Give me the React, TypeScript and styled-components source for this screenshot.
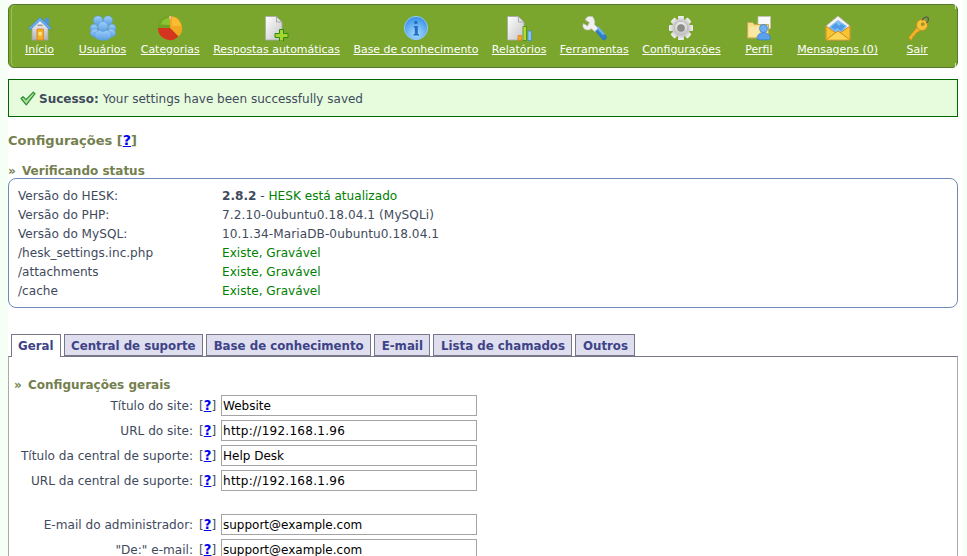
import React from "react";
import styled, { createGlobalStyle } from "styled-components";

const Global = createGlobalStyle`
  html, body {
    margin: 0;
    height: 100%;
    overflow: hidden;
    background: #f5fff5;
  }
  body {
    font-family: "DejaVu Sans", Verdana, sans-serif;
    font-size: 12.1px;
    color: #414a5c;
  }
`;

const Wrapper = styled.div`
  width: 950px;
  margin-left: 8px;
  padding: 4px 5px 0 0;
  background: #fff;
`;

const Menu = styled.nav`
  position: relative;
  display: flex;
  height: 64px;
  box-sizing: border-box;
  background: #7aa62d;
  border: 1px solid #55792a;
  border-radius: 6px;
  box-shadow: inset 2px 0 0 #7aa62d, inset 3px 0 0 #97c04f;

  &::before,
  &::after {
    content: "";
    position: absolute;
    right: 1px;
    width: 1px;
    height: 4px;
    background: #d5e4ba;
  }
  &::before { top: 0; }
  &::after { bottom: 0; }
`;

const MenuItem = styled.a<{ $min?: number }>`
  display: flex;
  flex-direction: column;
  align-items: center;
  min-width: ${(p) => p.$min ?? 63}px;
  box-sizing: border-box;
  padding: 10px 6.75px 0;
  color: #fff;
  font-size: 10.95px;
  line-height: 13px;
  text-decoration: underline;
  white-space: nowrap;
  &:first-child { margin-left: -1px; }
  svg { display: block; margin-bottom: 2px; }
`;

const Notice = styled.div`
  display: flex;
  align-items: center;
  height: 38px;
  box-sizing: border-box;
  margin-top: 11px;
  padding: 1px 0 0 11px;
  gap: 3px;
  background: #e6fcdc;
  border: 1px solid #006600;
  font-size: 12px;
  b { margin-right: 4px; }
`;

const PageTitle = styled.h3`
  margin: 16px 0 0;
  font-size: 13px;
  line-height: 15px;
  font-weight: bold;
  color: #74804e;
`;

const SectionTitle = styled.h4<{ $top: number; $bottom?: number }>`
  margin: ${(p) => p.$top}px 0 ${(p) => p.$bottom ?? 0}px;
  font-size: 12px;
  line-height: 14px;
  font-weight: bold;
  color: #74804e;
  span { margin-right: 2px; }
`;

const HelpLink = styled.span`
  color: #0000ee;
  font-weight: bold;
  font-size: 1.1em;
  text-decoration: underline;
`;

const StatusBox = styled.div`
  display: grid;
  grid-template-columns: 204px 1fr;
  grid-auto-rows: 19px;
  align-items: center;
  height: 130px;
  box-sizing: border-box;
  padding: 7px 9px 0;
  border: 1px solid #6f8ab5;
  border-radius: 8px;
`;

const Version = styled.span`
  letter-spacing: 0.08px;
`;

const Ok = styled.span`
  color: #008000;
`;

const Tabs = styled.div`
  display: flex;
  gap: 3px;
  margin-top: 26px;
  padding-left: 3px;
  height: 23px;
  position: relative;
  z-index: 1;
`;

const Tab = styled.div<{ $active?: boolean }>`
  box-sizing: border-box;
  height: ${(p) => (p.$active ? 23 : 22)}px;
  padding: 0 ${(p) => (p.$active ? 6 : 6.5)}px;
  line-height: 22px;
  font-size: 11.8px;
  font-weight: bold;
  color: #3e4388;
  background: ${(p) => (p.$active ? "#fff" : "#dedeee")};
  border: 1px solid #77778b;
  border-bottom: ${(p) => (p.$active ? "none" : "1px solid #77778b")};
`;

const Panel = styled.div`
  margin-top: -1px;
  height: 300px;
  box-sizing: border-box;
  padding: 21px 5px 0;
  border-top: 1px solid #77778b;
  border-left: 1px solid #aaa;
  border-right: 1px solid #aaa;
`;

const FormRow = styled.div<{ $gap?: boolean }>`
  display: flex;
  align-items: center;
  height: 21px;
  margin-bottom: ${(p) => (p.$gap ? 23 : 4)}px;
`;

const FieldLabel = styled.label`
  width: 179px;
  text-align: right;
  white-space: nowrap;
  flex: none;
`;

const Help = styled.span`
  margin-left: 6px;
  width: 22px;
  flex: none;
  color: #414a5c;
`;

const TextField = styled.input<{ $digits?: boolean }>`
  width: 256px;
  height: 21px;
  box-sizing: border-box;
  padding: 1px;
  border: 1px solid #a4a4a4;
  border-radius: 0;
  outline: none;
  background: #fff;
  font: 12px "DejaVu Sans", Verdana, sans-serif;
  letter-spacing: ${(p) => (p.$digits ? "0.27px" : "0")};
  color: #000;
`;

const Icon = ({ children }: { children: React.ReactNode }) => (
  <svg width="26" height="26" viewBox="0 0 26 26">{children}</svg>
);

const HomeIcon = () => (
  <Icon>
    <defs>
      <linearGradient id="homeWall" x1="0" y1="0" x2="0" y2="1">
        <stop offset="0" stopColor="#fbfbfb" />
        <stop offset="1" stopColor="#b4b4b8" />
      </linearGradient>
    </defs>
    <path d="M18 3h4v7h-4z" fill="#4c94e0" />
    <path d="M5 11 13 4l8 7v14H5z" fill="url(#homeWall)" stroke="#a0a0a8" strokeWidth=".7" />
    <path d="M1.500 13.500 13 2.500l11.500 11-1.800 1L13 5.600 3.300 14.500z" fill="#6fb0f0" stroke="#3f86d6" strokeWidth=".8" />
    <path d="M10.500 9.500h5v1.600h-5z" fill="#9a9aa0" />
    <path d="M10 14h6.400v11H10z" fill="#f5b324" stroke="#e07f1c" strokeWidth=".8" />
    <path d="M11.600 17h3.200v3.400h-3.200z" fill="#ffe98a" />
  </Icon>
);

const UsersIcon = () => (
  <Icon>
    <defs>
      <linearGradient id="userBlue" x1="0" y1="0" x2="0" y2="1">
        <stop offset="0" stopColor="#9fd0fa" />
        <stop offset="1" stopColor="#5c9fe6" />
      </linearGradient>
    </defs>
    <g fill="url(#userBlue)" stroke="#5a9de4" strokeWidth=".6">
      <circle cx="8" cy="5.500" r="4.600" />
      <circle cx="18" cy="5.500" r="4.600" />
      <circle cx="4" cy="13" r="3.700" />
      <circle cx="22" cy="13" r="3.700" />
      <ellipse cx="5" cy="18" rx="4.600" ry="4" />
      <ellipse cx="21" cy="18" rx="4.600" ry="4" />
      <ellipse cx="13" cy="20" rx="8.600" ry="5.200" />
      <circle cx="13" cy="11.500" r="5" />
    </g>
  </Icon>
);

const PieIcon = () => (
  <Icon>
    <path d="M13 13V1a12 12 0 0 1 8.500 20.500z" fill="#f0a820" />
    <path d="M15 2a11 11 0 0 1 9 9h-9z" fill="#ffc53a" opacity=".7" />
    <path d="M13 13l8.500 8.500A12 12 0 0 1 1 13z" fill="#d5341f" />
    <path d="M13 13H1A12 12 0 0 1 13 1z" fill="#6fa31f" />
    <path d="M3.500 9.500A10 10 0 0 1 11 3l2 1v6z" fill="#8cc333" />
    <path d="M12 1h2v3h-2z" fill="#e8b8a0" />
  </Icon>
);

const PageShape = ({ id }: { id: string }) => (
  <>
    <defs>
      <linearGradient id={id} x1="0" y1="0" x2="1" y2="1">
        <stop offset="0" stopColor="#ffffff" />
        <stop offset="1" stopColor="#c4c4c4" />
      </linearGradient>
    </defs>
    <path d="M1.500 1.500h11l5.500 5.500v18h-16.500z" fill={`url(#${id})`} stroke="#a8a8a8" strokeWidth=".8" />
    <path d="M12.500 1.500v5.500h5.500z" fill="#e4e4e4" stroke="#9a9a9a" strokeWidth=".8" />
  </>
);

const ResponseIcon = () => (
  <Icon>
    <PageShape id="docA" />
    <path d="M15.500 14.500h4v4h4.500v4h-4.500v3.500h-4v-3.500h-4.500v-4h4.500z" fill="#a6d62c" stroke="#2e8a14" strokeWidth="1" />
  </Icon>
);

const InfoIcon = () => (
  <Icon>
    <defs>
      <radialGradient id="infoBlue" cx=".5" cy=".75" r=".7">
        <stop offset="0" stopColor="#a8dcff" />
        <stop offset="1" stopColor="#3c92ea" />
      </radialGradient>
    </defs>
    <circle cx="13" cy="13" r="11.600" fill="url(#infoBlue)" stroke="#8cc8fa" strokeWidth="1" />
    <circle cx="12.800" cy="7.500" r="1.700" fill="#1f6fc4" />
    <path d="M10.800 11h4v8h1.200v1.500h-5.500v-1.500h1.300v-6.500h-1z" fill="#1f6fc4" />
  </Icon>
);

const ReportIcon = () => (
  <Icon>
    <PageShape id="docB" />
    <path d="M12 20.500h3.500v5h-3.500z" fill="#f6a623" stroke="#e0761a" strokeWidth=".7" />
    <path d="M17 11.500h3.500v14h-3.500z" fill="#b8d92c" stroke="#2e8a14" strokeWidth=".7" />
    <path d="M22 16h3.300v9.500h-3.300z" fill="#8cc8f5" stroke="#3f86d6" strokeWidth=".7" />
  </Icon>
);

const WrenchIcon = () => (
  <Icon>
    <path d="M13 14l3-3 9 10c1 1.500 0 4-3 4z" fill="#2f7fd0" stroke="#2466ad" strokeWidth=".5" />
    <path d="M15 13l2-2 7 8-2 1z" fill="#6fb2ee" />
    <path d="M11 1.500c-3-.8-6.200.5-6.700 3.500l4 2.500-1.800 3.500L2.500 8.500C.8 11.500 2.800 15 6.500 15c1.700 0 3-.4 3.800-1.300l3.700 3 3-3.700-3.500-3.500c.8-3-.2-6-2.500-8.500z" fill="#f0f0f0" stroke="#b8b8b8" strokeWidth=".6" />
  </Icon>
);

const GearIcon = () => (
  <Icon>
    <defs>
      <linearGradient id="gearGrey" x1="0" y1="0" x2="0" y2="1">
        <stop offset="0" stopColor="#f4f4f4" />
        <stop offset="1" stopColor="#bcbcbc" />
      </linearGradient>
    </defs>
    <g fill="url(#gearGrey)">
      <circle cx="13" cy="13" r="9" />
      {[0, 45, 90, 135, 180, 225, 270, 315].map((a) => (
        <rect key={a} x="10" y="1" width="6" height="6" rx="1" transform={`rotate(${a} 13 13)`} />
      ))}
    </g>
    <circle cx="13" cy="13" r="3.800" fill="#8d8d86" />
  </Icon>
);

const ProfileIcon = () => (
  <Icon>
    <path d="M12 1.500h12.500v12H12z" fill="#fafafa" stroke="#c2c2b8" strokeWidth=".8" />
    <path d="M1.500 7.500h5l2 2h14v13.500h-21z" fill="#f5dc86" stroke="#c9a858" strokeWidth="1" />
    <path d="M3 11.500h18v10H3z" fill="#f9e7a4" />
    <circle cx="17.500" cy="13.500" r="4" fill="#70b0f0" stroke="#2f7fd0" strokeWidth=".7" />
    <path d="M11 24c0-4 2.800-6.500 6.500-6.500S24.500 20 24.500 24c0 1.200-13.500 1.200-13.500 0z" fill="#5aa0ea" stroke="#2f7fd0" strokeWidth=".7" />
  </Icon>
);

const MailIcon = () => (
  <Icon>
    <path d="M1 11 13 1l12 10v14H1z" fill="#f4f4f4" stroke="#b5b5b5" strokeWidth=".8" />
    <path d="M4 12l9-7 9 6-5 8h-8z" fill="#7fbcf3" />
    <path d="M6 12l5-4 3 3-4 4zM12 13l4-4 4 2-4 5z" fill="#4f9be6" />
    <path d="M1 11l12 8.500L25 11v14H1z" fill="#f6c531" stroke="#d68a17" strokeWidth="1" />
    <path d="M1.500 24.500 13 16l11.500 8.500" fill="#f9d655" stroke="#d68a17" strokeWidth="1" />
  </Icon>
);

const KeyIcon = () => (
  <Icon>
    <path d="M14 11 4.500 22.500 7 25.500l1.500-2 .5-2 1.800-.6.400-1.900L18.500 14z" fill="#f2b42a" stroke="#c9841a" strokeWidth=".7" />
    <circle cx="18" cy="10" r="5.500" fill="#f7c438" stroke="#c9841a" strokeWidth=".8" />
    <circle cx="18.800" cy="9.200" r="1.600" fill="#7aa62d" stroke="#c9841a" strokeWidth=".6" />
    <path d="M18.500 5.500c0-3 5-4.500 5.700-2.500s-.6 4-2 5" fill="none" stroke="#5c5c50" strokeWidth="1.300" />
  </Icon>
);

const CheckIcon = () => (
  <svg width="16" height="15" viewBox="0 0 16 15">
    <path d="M1 7.500l2-1.800 3 3L13.300 1.200 15 2.700 6.300 13.800z" fill="#a6e090" stroke="#2f8a3a" strokeWidth="1.200" strokeLinejoin="round" />
  </svg>
);

const menuItems = [
  { label: "Início", icon: <HomeIcon /> },
  { label: "Usuários", icon: <UsersIcon /> },
  { label: "Categorias", icon: <PieIcon /> },
  { label: "Respostas automáticas", icon: <ResponseIcon /> },
  { label: "Base de conhecimento", icon: <InfoIcon /> },
  { label: "Relatórios", icon: <ReportIcon /> },
  { label: "Ferramentas", icon: <WrenchIcon /> },
  { label: "Configurações", icon: <GearIcon /> },
  { label: "Perfil", icon: <ProfileIcon /> },
  { label: "Mensagens (0)", icon: <MailIcon /> },
  { label: "Sair", icon: <KeyIcon />, min: 65 },
];

const tabs = ["Geral", "Central de suporte", "Base de conhecimento", "E-mail", "Lista de chamados", "Outros"];

const fields = [
  { label: "Título do site:", value: "Website" },
  { label: "URL do site:", value: "http://192.168.1.96", digits: true },
  { label: "Título da central de suporte:", value: "Help Desk" },
  { label: "URL da central de suporte:", value: "http://192.168.1.96", digits: true, gap: true },
  { label: "E-mail do administrador:", value: "support@example.com" },
  { label: '"De:" e-mail:', value: "support@example.com" },
];

export default function App() {
  return (
    <Wrapper>
      <Global />
      <Menu>
        {menuItems.map((m) => (
          <MenuItem key={m.label} $min={m.min}>
            {m.icon}
            {m.label}
          </MenuItem>
        ))}
      </Menu>

      <Notice>
        <CheckIcon />
        <span><b>Sucesso:</b>Your settings have been successfully saved</span>
      </Notice>

      <PageTitle>Configurações [<HelpLink>?</HelpLink>]</PageTitle>

      <SectionTitle $top={16}><span>»</span> Verificando status</SectionTitle>
      <StatusBox>
        <span>Versão do HESK:</span>
        <span><b>2.8.2</b> - <Ok>HESK está atualizado</Ok></span>
        <span>Versão do PHP:</span>
        <Version>7.2.10-0ubuntu0.18.04.1 (MySQLi)</Version>
        <span>Versão do MySQL:</span>
        <Version>10.1.34-MariaDB-0ubuntu0.18.04.1</Version>
        <span>/hesk_settings.inc.php</span>
        <Ok>Existe, Gravável</Ok>
        <span>/attachments</span>
        <Ok>Existe, Gravável</Ok>
        <span>/cache</span>
        <Ok>Existe, Gravável</Ok>
      </StatusBox>

      <Tabs>
        {tabs.map((t, i) => (
          <Tab key={t} $active={i === 0}>{t}</Tab>
        ))}
      </Tabs>
      <Panel>
        <SectionTitle $top={0} $bottom={3}><span>»</span> Configurações gerais</SectionTitle>
        {fields.map((f) => (
          <FormRow key={f.label} $gap={f.gap}>
            <FieldLabel>{f.label}</FieldLabel>
            <Help>[<HelpLink>?</HelpLink>]</Help>
            <TextField defaultValue={f.value} $digits={f.digits} />
          </FormRow>
        ))}
      </Panel>
    </Wrapper>
  );
}
